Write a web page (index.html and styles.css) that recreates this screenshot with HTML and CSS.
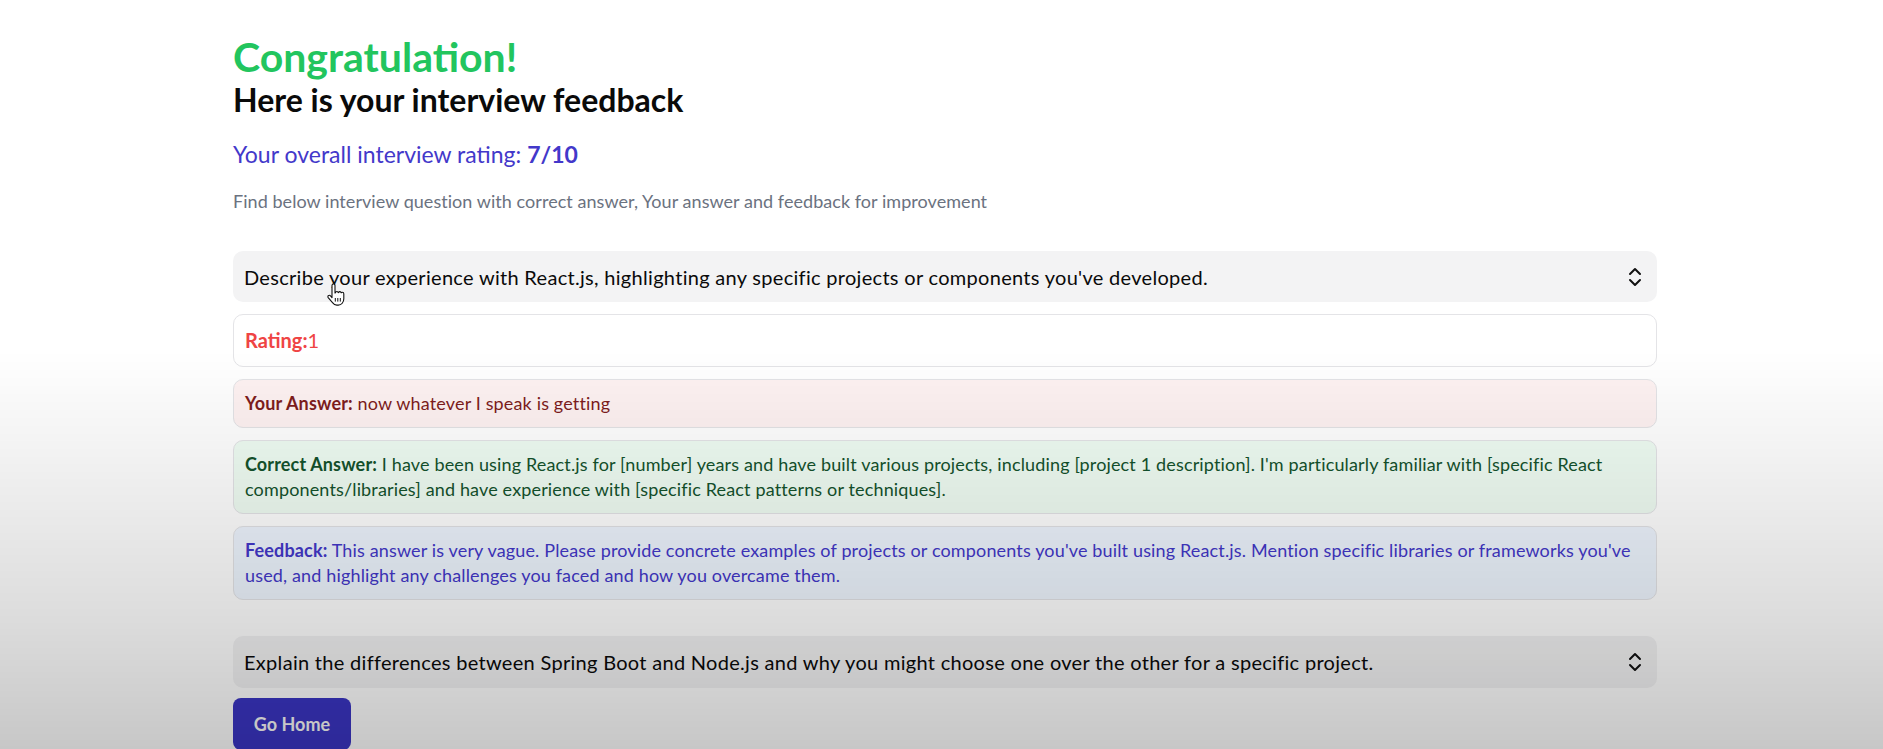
FILE: index.html
```
<!DOCTYPE html>
<html lang="en">
<head>
<meta charset="utf-8">
<title>Interview Feedback</title>
<link rel="stylesheet" href="styles.css">
</head>
<body>
<main class="page">
  <h1 class="title">Congratulation!</h1>
  <h2 class="subtitle">Here is your interview feedback</h2>
  <p class="overall">Your overall interview rating: <strong>7/10</strong></p>
  <p class="hint">Find below interview question with correct answer, Your answer and feedback for improvement</p>

  <section class="item first">
    <button class="trigger">
      <span>Describe your experience with React.js, highlighting any specific projects or components you've developed.</span>
      <svg class="chev" viewBox="0 0 24 24" width="24" height="24" fill="none" stroke="currentColor" stroke-width="2" stroke-linecap="round" stroke-linejoin="round"><path d="m7 15 5 5 5-5"/><path d="m7 9 5-5 5 5"/></svg>
    </button>
    <div class="content">
      <p class="box rating"><strong>Rating:</strong>1</p>
      <p class="box small ans"><strong>Your Answer:</strong> now whatever I speak is getting</p>
      <p class="box small correct"><strong>Correct Answer:</strong> I have been using React.js for [number] years and have built various projects, including [project 1 description]. I'm particularly familiar with [specific React components/libraries] and have experience with [specific React patterns or techniques].</p>
      <p class="box small fb"><strong>Feedback:</strong> This answer is very vague. Please provide concrete examples of projects or components you've built using React.js. Mention specific libraries or frameworks you've used, and highlight any challenges you faced and how you overcame them.</p>
    </div>
  </section>

  <section class="item second">
    <button class="trigger">
      <span>Explain the differences between Spring Boot and Node.js and why you might choose one over the other for a specific project.</span>
      <svg class="chev" viewBox="0 0 24 24" width="24" height="24" fill="none" stroke="currentColor" stroke-width="2" stroke-linecap="round" stroke-linejoin="round"><path d="m7 15 5 5 5-5"/><path d="m7 9 5-5 5 5"/></svg>
    </button>
  </section>

  <button class="home">Go Home</button>
</main>
<svg class="cursor" viewBox="0 0 20 24" width="20" height="24"><path d="M6 2.5c0-1 .7-1.6 1.5-1.6S9 1.5 9 2.5V10l.4-.2c.2-.9.8-1.3 1.5-1.3s1.2.5 1.3 1.2l.3-.1c.3-.7.8-1 1.4-1 .7 0 1.2.5 1.3 1.2.4-.4.8-.5 1.2-.5.8 0 1.4.6 1.4 1.5v5c0 3.5-2.3 6.3-5.5 6.3h-1.5c-2 0-3.2-.9-4.3-2.4L2.2 14.6c-.5-.7-.4-1.6.3-2 .7-.5 1.5-.3 2 .3L6 14.7z" fill="#fff" stroke="#111" stroke-width="1.1" stroke-linejoin="round"/><path d="M9.3 15v3.6M11.8 15v3.6M14.3 15v3.6" stroke="#111" stroke-width="1"/></svg>
</body>
</html>
```
FILE: styles.css
```
* { box-sizing: border-box; }
html, body { margin: 0; padding: 0; }
body {
  background: #ffffff;
  font-family: "Lato", "Noto Sans", sans-serif;
  color: #0a0a0a;
  height: 749px;
  overflow: hidden;
  position: relative;
}
body::after {
  content: "";
  position: fixed;
  inset: 0;
  pointer-events: none;
  background: linear-gradient(to bottom,
    rgba(0,0,0,0) 0px,
    rgba(0,0,0,0) 350px,
    rgba(0,0,0,0.04) 430px,
    rgba(0,0,0,0.137) 620px,
    rgba(0,0,0,0.22) 749px);
}
.page {
  padding: 35px 226px 0 233px;
}
.title {
  margin: 0;
  font-size: 41px;
  line-height: 44px;
  font-weight: 700;
  color: #22c55e;
}
.subtitle {
  margin: 3px 0 0;
  font-size: 32px;
  line-height: 36px;
  font-weight: 700;
  color: #0a0a0a;
}
.overall {
  margin: 22px 0 0;
  font-size: 23px;
  line-height: 28px;
  color: #4338ca;
}
.overall strong { font-weight: 700; }
.hint {
  margin: 21px 0 0;
  font-size: 18px;
  line-height: 24px;
  letter-spacing: 0.05px;
  color: #6b7280;
}
.item.first { margin-top: 38px; }
.item.second { margin-top: 36px; }
.trigger {
  width: 100%;
  display: flex;
  justify-content: space-between;
  align-items: center;
  gap: 34px;
  text-align: left;
  background: #f3f3f4;
  border: none;
  border-radius: 10px;
  padding: 10px 10px 10px 11px;
  min-height: 51px;
  font-family: inherit;
  font-size: 20px;
  letter-spacing: 0.3px;
  line-height: 30px;
  color: #0a0a0a;
  cursor: pointer;
}
.second .trigger { min-height: 52px; }
.chev { flex: none; color: #111; }
.content {
  display: flex;
  flex-direction: column;
  gap: 12px;
  margin-top: 12px;
}
.box {
  margin: 0;
  border: 1px solid #e4e4e7;
  border-radius: 10px;
  padding: 11px 11px;
}
.rating {
  color: #ef4444;
  font-size: 20px;
  line-height: 29px;
  background: #fff;
}
.small {
  font-size: 18px;
  letter-spacing: 0.15px;
  line-height: 25px;
}
.ans { background: #fef2f2; color: #7f1d1d; }
.correct { background: #f0fdf4; color: #14532d; }
.fb { background: #eff6ff; color: #4338ca; }
.home {
  margin-top: 10px;
  height: 52px;
  width: 118px;
  border: none;
  border-radius: 8px;
  background: #3b35c4;
  color: #fafafa;
  font-family: inherit;
  font-size: 18px;
  font-weight: 700;
  cursor: pointer;
}
.cursor {
  position: absolute;
  left: 326px;
  top: 283px;
  pointer-events: none;
}
```
